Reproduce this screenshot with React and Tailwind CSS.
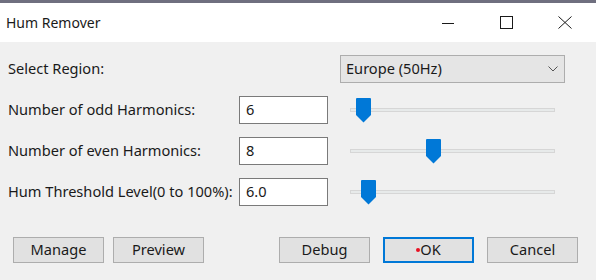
import { useState } from "react";

const font = { fontFamily: '"Noto Sans", "Segoe UI", sans-serif' };

function Slider({ offset }) {
    return (
        <div className="relative w-[205px] h-[28px] flex items-center">
            <div className="w-full h-[4px] bg-[#e7eaea] border border-[#d6d6d6]" />
            {/* thumb sits over the track */}
            <svg
                className="absolute top-[2px]"
                style={{ left: offset }}
                width="15"
                height="25"
                viewBox="0 0 15 25"
            >
                <path d="M1 0 H14 Q15 0 15 1 V17 L7.5 24.5 L0 17 V1 Q0 0 1 0 Z" fill="#0078d7" />
            </svg>
        </div>
    );
}

function Row({ label, value, offset }) {
    return (
        <div className="flex items-center h-[28px]">
            <span className="w-[231px] text-[14.6px] text-[#1a1a1a] whitespace-nowrap">{label}</span>
            <div className="w-[89px] h-[28px] bg-white border border-[#7a7a7a] flex items-center pl-[6px] text-[14.6px] text-[#1a1a1a]">
                {value}
            </div>
            <div className="ml-[22px]">
                <Slider offset={offset} />
            </div>
        </div>
    );
}

function Button({ children, primary }) {
    return (
        <button
            className={
                "w-[91px] h-[26px] bg-[#e1e1e1] text-[14.6px] text-[#1a1a1a] flex items-center justify-center " +
                (primary ? "border-2 border-[#0078d7]" : "border border-[#adadad]")
            }
        >
            {children}
        </button>
    );
}

export default function App() {
    const [region] = useState("Europe (50Hz)");

    return (
        <div className="w-[596px] h-[280px] flex flex-col overflow-hidden bg-[#f0f0f0]" style={font}>
            {/* bordure haute */}
            <div className="h-[3px] bg-[#6f6f7f]" />

            {/* barre de titre */}
            <div className="h-[39px] bg-white flex items-center">
                <span className="pl-[6px] text-[14px] text-[#1a1a1a]">Hum Remover</span>
                <div className="ml-auto flex items-center">
                    <svg width="13" height="13" viewBox="0 0 13 13" className="mr-[45px]">
                        <path d="M0 7.5 H12" stroke="#1a1a1a" strokeWidth="1" />
                    </svg>
                    <svg width="13" height="13" viewBox="0 0 13 13" className="mr-[45px]">
                        <rect x="0.5" y="0.5" width="12" height="12" fill="none" stroke="#1a1a1a" strokeWidth="1" />
                    </svg>
                    <svg width="14" height="13" viewBox="0 0 14 13" className="mr-[24px]">
                        <path d="M0.5 0.5 L13.5 12.5 M13.5 0.5 L0.5 12.5" stroke="#1a1a1a" strokeWidth="1" />
                    </svg>
                </div>
            </div>

            {/* contenu */}
            <div className="flex-1 pl-[8px] pt-[13px] flex flex-col gap-[13px]">
                <div className="flex items-center h-[28px]">
                    <span className="w-[231px] text-[14.6px] text-[#1a1a1a]">Select Region:</span>
                    <div className="ml-[101px] w-[225px] h-[28px] bg-[#e5e5e5] border border-[#adadad] flex items-center pl-[5px] pr-[6px] text-[14.6px] text-[#1a1a1a]">
                        {region}
                        <svg width="10" height="6" viewBox="0 0 10 6" className="ml-auto">
                            <path d="M0.5 0.5 L5 5 L9.5 0.5" fill="none" stroke="#555" strokeWidth="1" />
                        </svg>
                    </div>
                </div>
                <Row label="Number of odd Harmonics:" value="6" offset={6} />
                <Row label="Number of even Harmonics:" value="8" offset={76} />
                <Row label="Hum Threshold Level(0 to 100%):" value="6.0" offset={11} />
            </div>

            {/* boutons */}
            <div className="h-[43px] flex items-start pl-[13px]">
                <div className="flex gap-[9px]">
                    <Button>Manage</Button>
                    <Button>Preview</Button>
                </div>
                <div className="ml-[75px] flex gap-[13px]">
                    <Button>Debug</Button>
                    <Button primary>
                        <span className="w-[4px] h-[4px] rounded-full bg-[#e81123]" />
                        OK
                    </Button>
                    <Button>Cancel</Button>
                </div>
            </div>
        </div>
    );
}
